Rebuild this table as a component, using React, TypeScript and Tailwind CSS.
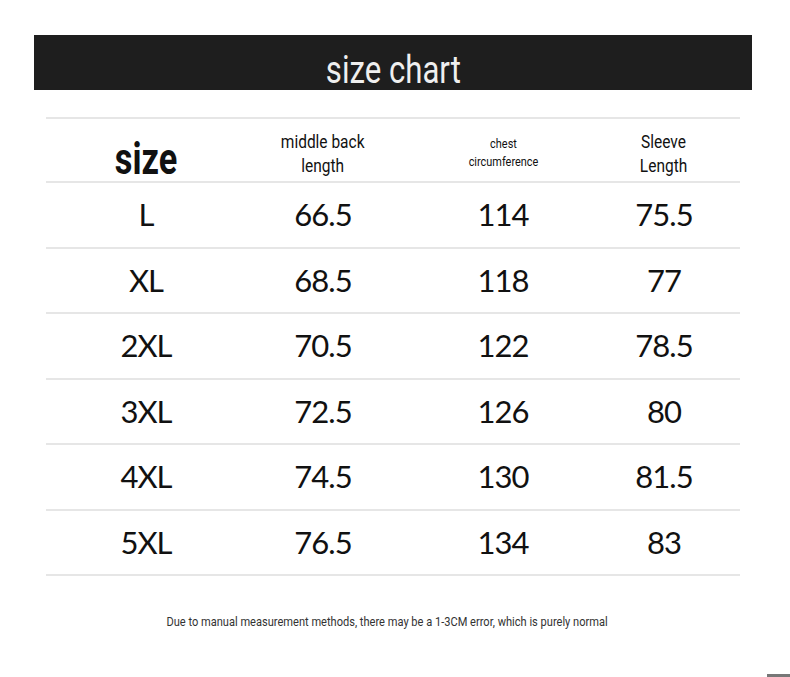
import React from 'react'

const rows = [
    ['L', '66.5', '114', '75.5'],
    ['XL', '68.5', '118', '77'],
    ['2XL', '70.5', '122', '78.5'],
    ['3XL', '72.5', '126', '80'],
    ['4XL', '74.5', '130', '81.5'],
    ['5XL', '76.5', '134', '83'],
]

const narrow = { fontFamily: 'Roboto, "Liberation Sans", sans-serif' }
const num = { fontFamily: 'Lato, "Noto Sans", sans-serif' }

const App = () => {
    return (
        <div className="w-[790px] h-[677px] bg-white relative overflow-hidden">
            <div className="pt-[35px] pl-[34px]">
                <div className="w-[718px] h-[55px] bg-[#1e1e1e] flex justify-center items-end">
                    <span className="inline-block text-[#efefef] text-[38px] leading-none pb-[1px] scale-x-[0.82]" style={narrow}>
                        size chart
                    </span>
                </div>
            </div>
            <div className="ml-[46px] mt-[27px] w-[694px] border-t-2 border-[#e6e6e6]">
                <div className="grid grid-cols-[200px_154px_206px_116px] h-[64px] items-center pt-[7px] text-[#111] border-b-2 border-[#e6e6e6]">
                    <div className="text-center">
                        <span className="inline-block text-[44px] font-bold leading-none pt-[10px] scale-x-[0.78]" style={narrow}>size</span>
                    </div>
                    <div className="text-center">
                        <span className="inline-block text-[18px] leading-[24px] scale-x-[0.86]" style={narrow}>middle back<br />length</span>
                    </div>
                    <div className="text-center">
                        <span className="inline-block text-[13px] leading-[18px] scale-x-[0.84]" style={narrow}>chest<br />circumference</span>
                    </div>
                    <div className="text-center">
                        <span className="inline-block text-[18px] leading-[24px] scale-x-[0.86]" style={narrow}>Sleeve<br />Length</span>
                    </div>
                </div>
                {
                    rows.map((row) => (
                        <div key={row[0]} className="grid grid-cols-[200px_154px_206px_116px] h-[65.5px] items-center text-[#111] border-b-2 border-[#e6e6e6]">
                            {
                                row.map((cell, i) => (
                                    <div key={i} className="text-center text-[31px] leading-none tracking-[-1px]" style={num}>
                                        {cell}
                                    </div>
                                ))
                            }
                        </div>
                    ))
                }
            </div>
            <div className="mt-[32px] w-[774px] text-center text-[#333]">
                <span className="inline-block text-[13.5px] scale-x-[0.82]" style={narrow}>
                    Due to manual measurement methods, there may be a 1-3CM error, which is purely normal
                </span>
            </div>
            <div className="absolute left-[767px] top-[674px] w-[23px] h-[3px] bg-[#777]" />
        </div>
    )
}

export default App
